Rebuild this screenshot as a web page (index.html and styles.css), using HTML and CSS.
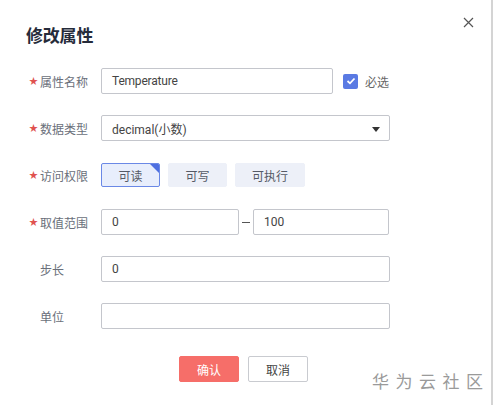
FILE: index.html
```html
<!DOCTYPE html>
<html lang="zh">
<head>
<meta charset="utf-8">
<link rel="stylesheet" href="styles.css">
</head>
<body>
<div class="dialog">
  <button class="close" aria-label="close">
    <svg width="11" height="11" viewBox="0 0 11 11"><path d="M1 1 L10 10 M10 1 L1 10" stroke="#555" stroke-width="1.2" fill="none"/></svg>
  </button>
  <h1 class="title">修改属性</h1>
  <div class="form">
    <div class="row">
      <div class="label"><span class="star">★</span>属性名称</div>
      <div class="input name">Temperature</div>
      <label class="check"><span class="box"><svg width="10" height="8" viewBox="0 0 10 8"><path d="M1.5 4 L4 6.3 L8.5 1.5" stroke="#fff" stroke-width="1.8" fill="none"/></svg></span>必选</label>
    </div>
    <div class="row">
      <div class="label"><span class="star">★</span>数据类型</div>
      <div class="input select">decimal(小数)<span class="arrow"></span></div>
    </div>
    <div class="row">
      <div class="label"><span class="star">★</span>访问权限</div>
      <div class="perms">
        <span class="perm active">可读<span class="corner"></span></span>
        <span class="perm">可写</span>
        <span class="perm wide">可执行</span>
      </div>
    </div>
    <div class="row">
      <div class="label"><span class="star">★</span>取值范围</div>
      <div class="range">
        <div class="input min">0</div>
        <span class="dash"></span>
        <div class="input max">100</div>
      </div>
    </div>
    <div class="row">
      <div class="label"><span class="star blank"></span>步长</div>
      <div class="input full">0</div>
    </div>
    <div class="row">
      <div class="label"><span class="star blank"></span>单位</div>
      <div class="input full"></div>
    </div>
  </div>
  <div class="actions">
    <button class="btn primary">确认</button>
    <button class="btn">取消</button>
  </div>
  <div class="watermark">华为云社区</div>
</div>
</body>
</html>
```
FILE: styles.css
```css
* { box-sizing: border-box; }
html, body { margin: 0; padding: 0; background: #fff; }
body {
  font-family: Roboto, "Noto Sans CJK SC", sans-serif;
  color: #333;
  font-size: 12px;
}
.dialog {
  position: relative;
  width: 493px;
  height: 405px;
  border-right: 2px solid #d4d4d4;
  padding: 0 0 0 29px;
}
.close {
  position: absolute;
  top: 16px;
  left: 462px;
  width: 13px;
  height: 13px;
  padding: 0;
  border: 0;
  background: none;
  display: flex;
  align-items: center;
  justify-content: center;
}
.title {
  margin: 0 0 0 -3px;
  padding-top: 25px;
  font-size: 17px;
  line-height: 22px;
  font-weight: 700;
  color: #252b3a;
  letter-spacing: -0.2px;
}
.form {
  display: flex;
  flex-direction: column;
  gap: 21px;
  margin-top: 21px;
}
.row {
  display: flex;
  align-items: center;
  height: 26px;
}
.label {
  width: 72px;
  flex: none;
  display: flex;
  align-items: center;
  color: #6a6f7a;
  font-size: 12px;
}
.star {
  color: #e0524f;
  width: 11px;
  font-size: 9px;
  line-height: 12px;
}
.input {
  height: 26px;
  border: 1px solid #c4c6cc;
  border-radius: 2px;
  padding: 0 10px;
  display: flex;
  align-items: center;
  color: #444;
  font-size: 12px;
  background: #fff;
}
.name { width: 232px; letter-spacing: -0.2px; }
.full, .select { width: 289px; }
.select { position: relative; }
.arrow {
  position: absolute;
  right: 9px;
  top: 11px;
  width: 0;
  height: 0;
  border-left: 4px solid transparent;
  border-right: 4px solid transparent;
  border-top: 5px solid #333;
}
.check {
  display: flex;
  align-items: center;
  margin-left: 10px;
  color: #666;
  gap: 7px;
}
.box {
  width: 15px;
  height: 15px;
  border-radius: 2px;
  background: #5a7ae3;
  display: flex;
  align-items: center;
  justify-content: center;
}
.perms {
  display: flex;
  gap: 8px;
}
.perm {
  position: relative;
  width: 59px;
  height: 24px;
  background: #edf0f8;
  border: 1px solid #edf0f8;
  border-radius: 2px;
  color: #555a66;
  display: flex;
  align-items: center;
  justify-content: center;
  overflow: hidden;
}
.perm.wide { width: 70px; }
.perm.active {
  background: #e8eefc;
  border-color: #6a88e6;
}
.corner {
  position: absolute;
  top: -1px;
  right: -1px;
  width: 11px;
  height: 11px;
  background: #4e6fe0;
  clip-path: polygon(0 0, 100% 0, 100% 100%);
}
.range {
  display: flex;
  align-items: center;
}
.min { width: 138px; }
.max { width: 136px; }
.dash {
  width: 14px;
  display: flex;
  justify-content: center;
}
.dash::before {
  content: "";
  width: 8px;
  height: 1px;
  background: #555;
}
.actions {
  display: flex;
  justify-content: center;
  gap: 9px;
  margin-top: 27px;
  padding-right: 33px;
}
.btn {
  width: 60px;
  height: 26px;
  border: 1px solid #c9cbd0;
  border-radius: 2px;
  background: #fff;
  color: #444;
  font-family: Roboto, "Noto Sans CJK SC", sans-serif;
  font-size: 12px;
  padding: 0;
}
.btn.primary {
  background: #f66e69;
  border-color: #f66e69;
  color: #fff;
}
.watermark {
  position: absolute;
  left: 372px;
  top: 370px;
  font-size: 17px;
  letter-spacing: 6.5px;
  color: #9a9a9a;
  font-family: "Noto Sans CJK SC", sans-serif;
  line-height: 22px;
}
```
